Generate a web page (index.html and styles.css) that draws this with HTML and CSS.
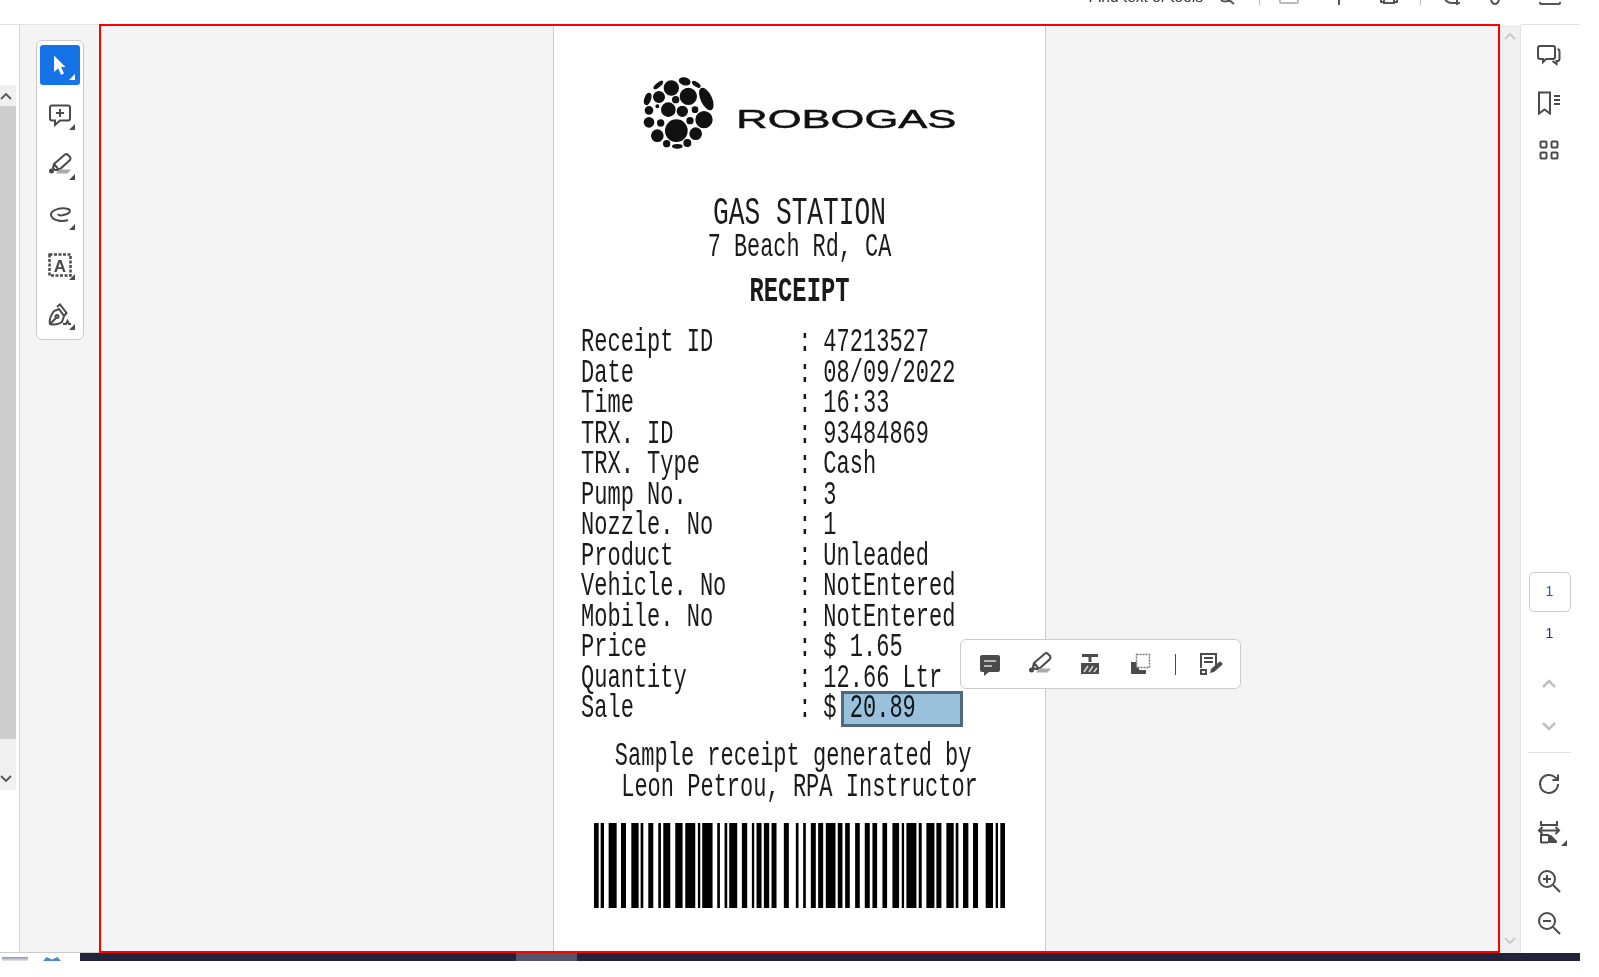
FILE: index.html
```html
<!DOCTYPE html>
<html lang="en">
<head>
    <meta charset="UTF-8">
    <title>Receipt</title>
    <link rel="stylesheet" href="styles.css">
</head>
<body>
<div class="app">

    <!-- top toolbar, cut off by the capture -->
    <div class="topbar">
        <span class="find-text">Find text or tools</span>
        <svg class="top-icon search" width="16" height="5" viewBox="0 0 16 5"><path d="M1 0C3 2 7 2 9 0M9 0l5 4" /></svg>
        <span class="top-sep sep-a"></span>
        <svg class="top-icon top-wide" height="5" viewBox="0 0 20 5"><path d="M1 0v2q0 1 1 1h16q1 0 1-1V0" /></svg>
        <svg class="top-icon gap-a" width="20" height="6" viewBox="0 0 20 6"><path d="M10 0v6M3 0h2M15 0h2" /></svg>
        <svg class="top-icon gap-b" width="20" height="5" viewBox="0 0 20 5"><path d="M2 0v2h2M18 0v2h-2M5 0v3h10V0" /></svg>
        <span class="top-sep sep-b"></span>
        <svg class="top-icon gap-c" width="20" height="6" viewBox="0 0 20 6"><path d="M1 0q2 4 7 4h8M13 0v6" /></svg>
        <svg class="top-icon gap-d" width="12" height="5" viewBox="0 0 12 5"><path d="M2 0q1 4 4 4t4-4" /></svg>
        <svg class="top-icon gap-e" width="22" height="3" viewBox="0 0 22 3"><path d="M1 0v1q0 1 1 1h18q1 0 1-1V0" /></svg>
    </div>

    <div class="workspace">
        <div class="gutter">
            <div class="gutter-scroll">
                <div class="gutter-up"><svg width="12" height="8" viewBox="0 0 12 8"><path d="M1 7l5-5 5 5" /></svg></div>
                <div class="gutter-thumb"></div>
                <div class="gutter-down"><svg width="12" height="8" viewBox="0 0 12 8"><path d="M1 1l5 5 5-5" /></svg></div>
            </div>
        </div>

        <div class="left-panel">
            <div class="tools">
                <div class="tool tool-active">
                    <svg width="24" height="24" viewBox="0 0 24 24"><path class="fill-white" d="M6 2.500L17.500 14H13l3 6.500-3 1.300-2.800-6.500L6 19z" /></svg>
                </div>
                <div class="tool">
                    <svg width="24" height="24" viewBox="0 0 24 24"><path class="line" d="M4 2.500h16q2 0 2 2v11q0 2-2 2h-8l-5 4.500v-4.500H4q-2 0-2-2v-11q0-2 2-2zM12 6v8M8 10h8" /></svg>
                </div>
                <div class="tool">
                    <svg width="24" height="24" viewBox="0 0 24 24"><path class="line" d="M6 11L17 1.500q1.500-1 3 .5l2 2q1 1.500 0 3L11 17zM6 11l-1 4 2 2 4 0" /><circle class="fill-dark" cx="3.500" cy="18" r="2.500" /><path class="fill-grey" d="M11 16.500h12l-3.500 4H8z" /></svg>
                </div>
                <div class="tool">
                    <svg width="24" height="24" viewBox="0 0 24 24"><path class="line" d="M20 17c-5 2-16 1-17-5-.5-5 10-8 17-6 3 1 2 4-1 5-4 1.500-8 2-9 0" /></svg>
                </div>
                <div class="tool">
                    <svg width="24" height="24" viewBox="0 0 24 24"><rect class="dashed" x="1.500" y="1.500" width="21" height="21" /><text class="tool-letter" x="12" y="18.500">A</text></svg>
                </div>
                <div class="tool">
                    <svg width="24" height="24" viewBox="0 0 24 24"><path class="line" d="M2 21c-1-4 1-9 4-13l5-2 5 7-2 6c-3 2-8 3-12 2zM2 21l6-6M9 4l3-2.500 6.500 8.500-2.500 3" /><circle class="line" cx="9" cy="13.500" r="1.500" /><path class="line" d="M15 21h3l1.500-3 1.500 3h2" /></svg>
                </div>
            </div>
        </div>

        <div class="canvas">
            <div class="page">
                <svg class="logo" width="320" height="80" viewBox="60 40 960 240">
                    <g class="logo-dots">
                        <circle cx="172" cy="213" r="32" />
                        <circle cx="208" cy="110" r="24" />
                        <circle cx="157" cy="85" r="21" />
                        <circle cx="255" cy="180" r="24" />
                        <circle cx="120" cy="112" r="16" />
                        <circle cx="148" cy="150" r="20" />
                        <circle cx="190" cy="155" r="15" />
                        <circle cx="90" cy="188" r="14" />
                        <circle cx="230" cy="222" r="17" />
                        <circle cx="115" cy="228" r="17" />
                        <circle cx="125" cy="190" r="9" />
                        <circle cx="213" cy="183" r="9" />
                        <circle cx="170" cy="120" r="9" />
                        <circle cx="228" cy="150" r="8" />
                        <circle cx="90" cy="152" r="11" />
                        <circle cx="143" cy="252" r="9" />
                        <circle cx="205" cy="250" r="10" />
                        <circle cx="115" cy="140" r="4" />
                        <ellipse cx="175" cy="260" rx="14" ry="5" />
                        <ellipse cx="197" cy="65" rx="16" ry="10" transform="rotate(15 197 65)" />
                        <ellipse cx="118" cy="76" rx="16" ry="5" transform="rotate(-40 118 76)" />
                        <ellipse cx="232" cy="74" rx="13" ry="5" transform="rotate(35 232 74)" />
                        <ellipse cx="262" cy="118" rx="15" ry="34" transform="rotate(-25 262 118)" />
                        <ellipse cx="86" cy="118" rx="8" ry="17" transform="rotate(20 86 118)" />
                    </g>
                    <text class="logo-name" x="352" y="205" textLength="660" lengthAdjust="spacingAndGlyphs">ROBOGAS</text>
                </svg>

                <div class="receipt-title">GAS STATION</div>
                <div class="receipt-address">7 Beach Rd, CA</div>
                <div class="receipt-heading">RECEIPT</div>

                <div class="receipt-rows">
                    <div class="row"><span>Receipt ID</span><span>:</span><span>47213527</span></div>
                    <div class="row"><span>Date</span><span>:</span><span>08/09/2022</span></div>
                    <div class="row"><span>Time</span><span>:</span><span>16:33</span></div>
                    <div class="row"><span>TRX. ID</span><span>:</span><span>93484869</span></div>
                    <div class="row"><span>TRX. Type</span><span>:</span><span>Cash</span></div>
                    <div class="row"><span>Pump No.</span><span>:</span><span>3</span></div>
                    <div class="row"><span>Nozzle. No</span><span>:</span><span>1</span></div>
                    <div class="row"><span>Product</span><span>:</span><span>Unleaded</span></div>
                    <div class="row"><span>Vehicle. No</span><span>:</span><span>NotEntered</span></div>
                    <div class="row"><span>Mobile. No</span><span>:</span><span>NotEntered</span></div>
                    <div class="row"><span>Price</span><span>:</span><span>$ 1.65</span></div>
                    <div class="row"><span>Quantity</span><span>:</span><span>12.66 Ltr</span></div>
                    <div class="row"><span>Sale</span><span>:</span><span>$ 20.89</span></div>
                </div>

                <div class="receipt-note note-one">Sample receipt generated by</div>
                <div class="receipt-note">Leon Petrou, RPA Instructor</div>

                <svg class="barcode" width="411" height="85" viewBox="72 0 1234 85" preserveAspectRatio="none">
                    <rect x="72" width="14" height="85" /><rect x="92" width="10" height="85" /><rect x="116" width="24" height="85" />
                    <rect x="153" width="15" height="85" /><rect x="184" width="22" height="85" /><rect x="212" width="8" height="85" />
                    <rect x="235" width="15" height="85" /><rect x="265" width="8" height="85" /><rect x="280" width="21" height="85" />
                    <rect x="316" width="22" height="85" /><rect x="346" width="30" height="85" /><rect x="384" width="7" height="85" />
                    <rect x="397" width="31" height="85" /><rect x="442" width="8" height="85" /><rect x="464" width="8" height="85" />
                    <rect x="478" width="24" height="85" /><rect x="516" width="16" height="85" /><rect x="546" width="7" height="85" />
                    <rect x="560" width="15" height="85" /><rect x="582" width="16" height="85" /><rect x="605" width="15" height="85" />
                    <rect x="642" width="15" height="85" /><rect x="678" width="8" height="85" /><rect x="700" width="8" height="85" />
                    <rect x="723" width="15" height="85" /><rect x="745" width="15" height="85" /><rect x="768" width="29" height="85" />
                    <rect x="804" width="14" height="85" /><rect x="826" width="14" height="85" /><rect x="856" width="14" height="85" />
                    <rect x="885" width="15" height="85" /><rect x="908" width="14" height="85" /><rect x="938" width="14" height="85" />
                    <rect x="968" width="20" height="85" /><rect x="996" width="7" height="85" /><rect x="1010" width="30" height="85" />
                    <rect x="1047" width="9" height="85" /><rect x="1070" width="24" height="85" /><rect x="1100" width="15" height="85" />
                    <rect x="1130" width="22" height="85" /><rect x="1158" width="8" height="85" /><rect x="1180" width="16" height="85" />
                    <rect x="1210" width="15" height="85" /><rect x="1248" width="22" height="85" /><rect x="1278" width="7" height="85" />
                    <rect x="1292" width="14" height="85" />
                </svg>

                <div class="selection"></div>
            </div>

            <!-- popup over the selected text -->
            <div class="quick-bar">
                <svg width="24" height="24" viewBox="0 0 24 24"><path class="fill-dark" d="M4 3h16q2 0 2 2v13q0 2-2 2h-9l-5 4v-4H4q-2 0-2-2V5q0-2 2-2z" /><path class="line-white" d="M6 9h12M6 14h8" /></svg>
                <svg width="24" height="24" viewBox="0 0 24 24"><path class="line" d="M6 11L17 1.500q1.500-1 3 .5l2 2q1 1.500 0 3L11 17zM6 11l-1 4 2 2 4 0" /><circle class="fill-dark" cx="3.500" cy="18" r="2.500" /><path class="fill-grey" d="M11 16.500h12l-3.500 4H8z" /></svg>
                <svg width="24" height="24" viewBox="0 0 24 24"><path class="line-thick" d="M4 3.500h16M12 3.500V10" /><rect class="fill-dark" x="3" y="11" width="18" height="11" /><path class="line-white" d="M6 20l4-6M11 20l4-6M16 20l3-4" /></svg>
                <svg width="24" height="24" viewBox="0 0 24 24"><path class="fill-dark" d="M3 10h8v8h7v3q0 1-1 1H4q-1 0-1-1z" /><rect class="dashed-thin" x="8.500" y="2.500" width="13" height="13" /></svg>
                <span class="quick-sep"></span>
                <svg width="24" height="24" viewBox="0 0 24 24"><path class="line" d="M17 15V2H2v14M5 6h9M5 10h9" /><rect class="line" x="2" y="18" width="5" height="4" /><path class="fill-dark" d="M11 21l1-4 8-7q1-1 2 0l1 1q1 1 0 2l-8 7z" /></svg>
            </div>
        </div>

        <div class="scrollbar">
            <svg width="12" height="8" viewBox="0 0 12 8"><path d="M1 7l5-5 5 5" /></svg>
            <svg width="12" height="8" viewBox="0 0 12 8"><path d="M1 1l5 5 5-5" /></svg>
        </div>

        <div class="right-panel">
            <div class="side-icon">
                <svg width="24" height="24" viewBox="0 0 24 24"><path class="line" d="M3 2h13q2 0 2 2v9q0 2-2 2H9l-3 3v-3H3q-2 0-2-2V4q0-2 2-2zM20.500 5q2 .5 2 2v8q0 2-2 2h-1v3l-4-3" /></svg>
            </div>
            <div class="side-icon">
                <svg width="24" height="24" viewBox="0 0 24 24"><path class="line" d="M2 1.500h11v21l-5.500-4-5.500 4zM17 5h6M17 9h6M17 13h6" /></svg>
            </div>
            <div class="side-icon">
                <svg width="24" height="24" viewBox="0 0 24 24"><rect class="line" x="3.500" y="3.500" width="6" height="6" rx="1" /><rect class="line" x="14.500" y="3.500" width="6" height="6" rx="1" /><rect class="line" x="3.500" y="14.500" width="6" height="6" rx="1" /><rect class="line" x="14.500" y="14.500" width="6" height="6" rx="1" /></svg>
            </div>

            <div class="page-box">1</div>
            <div class="page-count">1</div>
            <div class="page-arrow arrow-up"><svg width="14" height="9" viewBox="0 0 14 9"><path d="M1 8l6-6 6 6" /></svg></div>
            <div class="page-arrow arrow-down"><svg width="14" height="9" viewBox="0 0 14 9"><path d="M1 1l6 6 6-6" /></svg></div>
            <div class="side-divider"></div>

            <div class="side-icon view-first">
                <svg width="24" height="24" viewBox="0 0 24 24"><path class="line" d="M21 12a9 9 0 1 1-2.600-6.400L21 8M21 2.500V8h-5.500" /></svg>
            </div>
            <div class="side-icon view-fit">
                <svg width="24" height="24" viewBox="0 0 24 24"><path class="line" d="M4 1v4h16V1M2 10.500h20M5.500 7L2 10.500 5.500 14M18.500 7L22 10.500 18.500 14M4 23v-8h8M4 22.500h7" /><path class="fill-dark" d="M11 15h3l6 6v2h-9z" /></svg>
                <span class="corner"></span>
            </div>
            <div class="side-icon view-zoom">
                <svg width="24" height="24" viewBox="0 0 24 24"><circle class="line" cx="10" cy="10" r="8" /><path class="line" d="M16 16l7 7M10 6v8M6 10h8" /></svg>
            </div>
            <div class="side-icon view-zoom">
                <svg width="24" height="24" viewBox="0 0 24 24"><circle class="line" cx="10" cy="10" r="8" /><path class="line" d="M16 16l7 7M6 10h8" /></svg>
            </div>
        </div>
    </div>

    <!-- taskbar edge at the bottom of the capture -->
    <div class="taskbar">
        <div class="taskbar-left">
            <span class="tray-grey"></span>
            <span class="tray-blue"></span>
        </div>
        <div class="taskbar-dark"><span class="taskbar-tab"></span></div>
    </div>
</div>
</body>
</html>
```

FILE: styles.css
```css
body {
    margin: 0;
    background: #fff;
    font-family: "Liberation Sans", sans-serif;
}

.app {
    width: 1581px;
    height: 961px;
    display: flex;
    flex-direction: column;
}

svg {
    display: block;
}

/* top bar */
.topbar {
    height: 24px;
    flex: none;
    box-sizing: border-box;
    padding-bottom: 19px;
    padding-right: 20px;
    display: flex;
    justify-content: flex-end;
    align-items: flex-end;
    overflow: hidden;
}

.find-text {
    font-size: 15.500px;
    line-height: 16px;
    color: #333;
    margin-right: 17px;
    white-space: nowrap;
}

.top-icon {
    flex: none;
    fill: none;
    stroke: #555;
    stroke-width: 2;
}

.top-wide {
    width: 20px;
    stroke: #bbb;
}

.search {
    margin-right: 23px;
}

.top-sep {
    width: 1px;
    height: 5px;
    background: #bbb;
}

.sep-a {
    margin-right: 19px;
}

.sep-b {
    margin-left: 21px;
}

.gap-a {
    margin-left: 30px;
}

.gap-b {
    margin-left: 30px;
}

.gap-c {
    margin-left: 23px;
}

.gap-d {
    margin-left: 25px;
}

.gap-e {
    margin-left: 38px;
}

/* main row */
.workspace {
    height: 929px;
    flex: none;
    display: flex;
}

.gutter {
    width: 19px;
    flex: none;
    border-top: 1px solid #e2e2e2;
    border-bottom: 1px solid #ccc;
    box-sizing: border-box;
    padding-top: 60px;
}

.gutter-scroll {
    width: 16px;
    height: 705px;
    display: flex;
    flex-direction: column;
    background: #f0f0f0;
}

.gutter-up {
    height: 21px;
    display: flex;
    align-items: center;
}

.gutter-thumb {
    flex: 1;
    background: #cdcdcd;
}

.gutter-down {
    height: 51px;
}

.gutter-down svg {
    margin-top: 36px;
}

.gutter-up path,
.gutter-down path {
    fill: none;
    stroke: #555;
    stroke-width: 1.800;
}

.left-panel {
    width: 80px;
    flex: none;
    box-sizing: border-box;
    border-left: 1px solid #d8d8d8;
    border-top: 1px solid #e2e2e2;
    border-bottom: 1px solid #ccc;
    background: #f4f4f4;
    padding: 15px 0 0 16px;
}

.tools {
    width: 48px;
    box-sizing: border-box;
    padding: 4px 3px;
    background: #fff;
    border: 1px solid #ccc;
    border-radius: 6px;
    display: flex;
    flex-direction: column;
    gap: 10px;
}

.tool {
    width: 40px;
    height: 40px;
    border-radius: 3px;
    display: flex;
    align-items: center;
    justify-content: center;
    position: relative;
}

.tool::after,
.corner {
    content: "";
    position: absolute;
    right: 5px;
    bottom: 5px;
    border-style: solid;
    border-width: 0 0 6px 6px;
    border-color: transparent transparent #4b4b4b transparent;
}

.tool-active {
    background: #1473e6;
}

.tool-active::after {
    border-bottom-color: #fff;
}

.line {
    fill: none;
    stroke: #4b4b4b;
    stroke-width: 2;
}

.line-thick {
    fill: none;
    stroke: #4b4b4b;
    stroke-width: 3;
}

.line-white {
    fill: none;
    stroke: #ddd;
    stroke-width: 1.500;
}

.fill-white {
    fill: #fff;
}

.fill-dark {
    fill: #4b4b4b;
}

.fill-grey {
    fill: #aaa;
}

.dashed {
    fill: none;
    stroke: #4b4b4b;
    stroke-width: 2.500;
    stroke-dasharray: 3 1.500;
}

.dashed-thin {
    fill: #fff;
    stroke: #777;
    stroke-width: 1.500;
    stroke-dasharray: 2 1;
}

.tool-letter {
    font-family: "Liberation Sans", sans-serif;
    font-size: 17px;
    font-weight: 700;
    fill: #4b4b4b;
    text-anchor: middle;
}

/* document area */
.canvas {
    width: 1401px;
    flex: none;
    box-sizing: border-box;
    border: 2px solid #f00;
    background: #f4f4f4;
    display: flex;
    justify-content: center;
    position: relative;
}

.page {
    width: 493px;
    box-sizing: border-box;
    border-left: 1px solid #ccc;
    border-right: 1px solid #ccc;
    background: #fff;
    position: relative;
    color: #1a1a1a;
    font-family: "Liberation Mono", monospace;
    overflow: hidden;
}

.logo {
    margin: 47px 0 0 85px;
    overflow: visible;
}

.logo-dots {
    fill: #111;
    stroke: #111;
    stroke-width: 4;
}

.logo-name {
    font-family: "Liberation Sans", sans-serif;
    font-size: 76px;
    fill: #111;
    stroke: #111;
    stroke-width: 1.500;
}

.receipt-title,
.receipt-address,
.receipt-heading,
.receipt-note {
    display: flex;
    justify-content: center;
    white-space: nowrap;
}

.receipt-title {
    margin-top: 43px;
    font-size: 38px;
    line-height: 36px;
    transform: scaleX(.69);
}

.receipt-address {
    font-size: 33px;
    line-height: 31px;
    transform: scaleX(.662);
}

.receipt-heading {
    margin-top: 12px;
    font-size: 35px;
    line-height: 34px;
    font-weight: 700;
    transform: scaleX(.68);
}

.receipt-rows {
    margin: 19px 0 0 27px;
    width: 660px;
    transform: scaleX(.667);
    transform-origin: left top;
}

.row {
    display: grid;
    grid-template-columns: 16.450ch 1.900ch 1fr;
    font-size: 33px;
    line-height: 30.500px;
    white-space: pre;
}

.receipt-note {
    font-size: 33px;
    line-height: 31px;
    transform: scaleX(.667);
}

.note-one {
    margin-top: 16px;
    padding-right: 19px;
}

.barcode {
    margin: 20.500px 0 0 40px;
    fill: #000;
}

.selection {
    position: absolute;
    left: 287px;
    top: 665px;
    width: 122px;
    height: 36px;
    box-sizing: border-box;
    border: 3px solid #4c6b80;
    background: #9ac1dc;
    mix-blend-mode: multiply;
}

.quick-bar {
    position: absolute;
    left: 859px;
    top: 613px;
    width: 281px;
    height: 50px;
    box-sizing: border-box;
    background: #fff;
    border: 1px solid #ccc;
    border-radius: 6px;
    display: flex;
    align-items: center;
    padding-left: 17px;
    gap: 26px;
}

.quick-sep {
    width: 1px;
    height: 21px;
    background: #4b4b4b;
    margin: 0 -3px 0 -3px;
}

/* scrollbar and right panel */
.scrollbar {
    width: 21px;
    flex: none;
    margin-top: 1px;
    background: #f0f0f0;
    display: flex;
    flex-direction: column;
    align-items: center;
    justify-content: space-between;
    padding: 7px 1px 8px 0;
    box-sizing: border-box;
    border-right: 1px solid #e2e2e2;
}

.scrollbar path {
    fill: none;
    stroke: #c8c8c8;
    stroke-width: 1.800;
}

.right-panel {
    width: 59px;
    flex: none;
    box-sizing: border-box;
    border-top: 1px solid #e2e2e2;
    padding-top: 19px;
    display: flex;
    flex-direction: column;
    align-items: center;
}

.side-icon {
    height: 24px;
    margin-bottom: 23px;
    margin-right: 3px;
    position: relative;
}

.page-box {
    width: 42px;
    height: 40px;
    margin-top: 387px;
    margin-right: 2px;
    box-sizing: border-box;
    border: 1px solid #ccc;
    border-radius: 5px;
    font-size: 14px;
    line-height: 36px;
    text-align: center;
    color: #2a5f9e;
}

.page-count {
    margin-top: 12px;
    margin-right: 2px;
    font-size: 14px;
    line-height: 18px;
    color: #0b3d91;
}

.page-arrow {
    margin-right: 4px;
}

.page-arrow path {
    fill: none;
    stroke: #c0c0c0;
    stroke-width: 2.500;
}

.arrow-up {
    margin-top: 37px;
}

.arrow-down {
    margin-top: 34px;
}

.side-divider {
    width: 43px;
    height: 1px;
    background: #e2e2e2;
    margin-top: 21px;
    margin-right: 2px;
}

.view-first {
    margin-top: 19px;
    margin-bottom: 24px;
}

.view-fit {
    margin-bottom: 25px;
}

.view-fit .corner {
    right: -6px;
    bottom: -2px;
}

.view-zoom {
    margin-bottom: 18px;
}

/* taskbar */
.taskbar {
    height: 8px;
    flex: none;
    display: flex;
    margin-right: 1px;
}

.taskbar-left {
    width: 80px;
    flex: none;
    display: flex;
    align-items: flex-end;
    overflow: hidden;
}

.tray-grey {
    width: 26px;
    height: 4px;
    margin-left: 2px;
    background: linear-gradient(#8f93b0, #e6e8f2);
}

.tray-blue {
    width: 18px;
    height: 4px;
    margin-left: 15px;
    background: #4a8ad0;
    clip-path: polygon(0 100%, 20% 0, 50% 60%, 80% 0, 100% 100%);
}

.taskbar-dark {
    flex: 1;
    background: #23233d;
}

.taskbar-tab {
    display: block;
    width: 61px;
    height: 8px;
    margin-left: 436px;
    background: #54546a;
}
```
